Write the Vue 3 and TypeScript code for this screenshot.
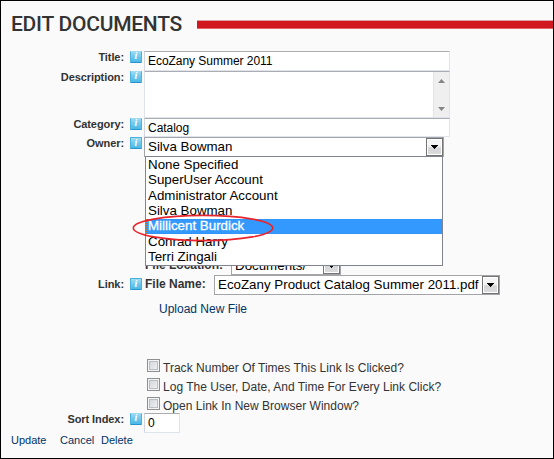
<script setup lang="ts">
import { ref } from 'vue'

const title = ref('EcoZany Summer 2011')
const category = ref('Catalog')
const sortIndex = ref('0')
const owner = 'Silva Bowman'
const highlighted = 'Millicent Burdick'
const owners: string[] = [
  'None Specified',
  'SuperUser Account',
  'Administrator Account',
  'Silva Bowman',
  'Millicent Burdick',
  'Conrad Harry',
  'Terri Zingali',
]
const trackingOptions: string[] = [
  'Track Number Of Times This Link Is Clicked?',
  'Log The User, Date, And Time For Every Link Click?',
  'Open Link In New Browser Window?',
]
</script>

<template>
  <main class="page">
    <header class="heading">
      <h1>EDIT DOCUMENTS</h1>
      <div class="rule"></div>
    </header>

    <section class="form">
      <div class="row title-row">
        <label>Title:</label>
        <span class="info clipped"><i>i</i></span>
        <input v-model="title" class="text-field" type="text" />
      </div>

      <div class="row description-row">
        <label>Description:</label>
        <span class="info clipped"><i>i</i></span>
        <div class="text-area">
          <div class="scrollbar">
            <svg width="7" height="4" viewBox="0 0 7 4"><path d="M0 4 3.5 0 7 4Z" fill="#858585" /></svg>
            <svg width="7" height="4" viewBox="0 0 7 4"><path d="M0 0H7L3.5 4Z" fill="#858585" /></svg>
          </div>
        </div>
      </div>

      <div class="row category-row">
        <label>Category:</label>
        <span class="info clipped"><i>i</i></span>
        <input v-model="category" class="text-field" type="text" />
      </div>

      <div class="row owner-row">
        <label>Owner:</label>
        <span class="info"><i>i</i></span>
        <div class="select owner-select">
          <span>{{ owner }}</span>
          <b class="arrow"><svg width="7" height="4" viewBox="0 0 7 4"><path d="M0 0H7V1H6V2H5V3H4V4H3V3H2V2H1V1H0Z" /></svg></b>
          <ul class="menu">
            <li v-for="name in owners" :key="name" :class="{ active: name === highlighted }">{{ name }}</li>
          </ul>
          <svg class="marker" width="144" height="30" viewBox="0 0 144 30">
            <ellipse cx="72" cy="15" rx="69.7" ry="12.6" fill="none" stroke="#e8242c" stroke-width="1.6" />
          </svg>
        </div>
      </div>

      <div class="row location-row">
        <span class="inner-label">File Location:</span>
        <div class="select location-select">
          <span>Documents/</span>
          <b class="arrow"><svg width="7" height="4" viewBox="0 0 7 4"><path d="M0 0H7V1H6V2H5V3H4V4H3V3H2V2H1V1H0Z" /></svg></b>
        </div>
      </div>

      <div class="row link-row">
        <label>Link:</label>
        <span class="info"><i>i</i></span>
        <span class="inner-label">File Name:</span>
        <div class="select file-select">
          <span>EcoZany Product Catalog Summer 2011.pdf</span>
          <b class="arrow"><svg width="7" height="4" viewBox="0 0 7 4"><path d="M0 0H7V1H6V2H5V3H4V4H3V3H2V2H1V1H0Z" /></svg></b>
        </div>
      </div>

      <a class="upload">Upload New File</a>

      <div class="checks">
        <div v-for="option in trackingOptions" :key="option" class="check">
          <span class="box"></span>
          <span>{{ option }}</span>
        </div>
      </div>

      <div class="row sort-row">
        <label>Sort Index:</label>
        <span class="info clipped"><i>i</i></span>
        <input v-model="sortIndex" class="text-field small" type="text" />
      </div>
    </section>

    <footer class="actions">
      <a class="update">Update</a>
      <a class="cancel">Cancel</a>
      <a>Delete</a>
    </footer>
  </main>
</template>

<style>
body {
  overflow: hidden;
}
</style>

<style scoped>
.page {
  box-sizing: border-box;
  width: 554px;
  height: 459px;
  border: 1px solid #000;
  background: #fafafa;
  font-family: 'Liberation Sans', Arial, sans-serif;
  color: #333;
  overflow: hidden;
}
.heading {
  display: flex;
  height: 50px;
}
h1 {
  margin: 9px 0 0 10px;
  width: 186px;
  font: 500 21px/28px Roboto, sans-serif;
  letter-spacing: -0.25px;
  white-space: nowrap;
  color: #333;
}
.rule {
  box-sizing: border-box;
  flex: 1;
  height: 9px;
  margin-top: 19px;
  background: #d0181e;
  border: solid #e0666b;
  border-width: 1px 0;
  border-top-color: #e0a0a3;
}
.row {
  display: flex;
  align-items: flex-start;
}
label {
  flex: none;
  width: 123px;
  margin-right: 6px;
  font-size: 11px;
  font-weight: bold;
  letter-spacing: -0.08px;
  line-height: 13px;
  text-align: right;
}
.info {
  flex: none;
  box-sizing: border-box;
  width: 12px;
  height: 12px;
  margin-right: 2px;
  border: 1px solid #4db1dc;
  border-bottom-color: #2b94cb;
  border-radius: 1px;
  background: linear-gradient(#a3dcf1, #74caec 45%, #4bb8e6);
  color: #fff;
  font: italic bold 10px/10px 'Liberation Serif', serif;
  text-align: center;
}
.info i {
  display: block;
}
.clipped {
  border-top: 0;
}
.text-field {
  box-sizing: border-box;
  width: 306px;
  height: 20px;
  padding: 0 3px;
  border: 1px solid #dfe3ec;
  border-top-color: #abadb3;
  border-left-color: #d2d6e0;
  background: #fff;
  font: 12px 'Liberation Sans', sans-serif;
  letter-spacing: -0.04px;
  color: #000;
  outline: none;
}
.title-row {
  height: 20px;
}
.description-row {
  height: 47px;
}
.text-area {
  box-sizing: border-box;
  display: flex;
  justify-content: flex-end;
  width: 306px;
  height: 47px;
  border: 1px solid #dfe3ec;
  border-top-color: #abadb3;
  background: #fff;
}
.scrollbar {
  box-sizing: border-box;
  display: flex;
  flex-direction: column;
  align-items: center;
  justify-content: space-between;
  width: 16px;
  padding: 7px 0 6px;
  background: #efefef;
  border-left: 1px solid #e4e4e4;
}
.category-row {
  height: 19px;
}
.category-row .text-field {
  height: 19px;
}
.owner-row {
  height: 119px;
}
.select {
  position: relative;
  box-sizing: border-box;
  display: flex;
  justify-content: space-between;
  height: 20px;
  padding-left: 3px;
  border: 1px solid #a3a5aa;
  background: #fff;
  font-size: 13.333px;
  line-height: 18px;
  color: #000;
  white-space: nowrap;
}
.arrow {
  box-sizing: border-box;
  display: flex;
  align-items: center;
  justify-content: center;
  width: 17px;
  height: 18px;
  border: 1px solid #747474;
  box-shadow: inset 0 0 0 1px #fff;
  background: linear-gradient(#f4f4f4 45%, #d6d6d8 55%, #dcdcde);
}
.owner-select {
  width: 300px;
}
.menu {
  position: absolute;
  top: 18px;
  left: 0;
  z-index: 2;
  box-sizing: border-box;
  width: 298px;
  height: 110px;
  margin: 0;
  padding: 0;
  border: 1px solid #7f8490;
  background: #fff;
  list-style: none;
}
.menu li {
  box-sizing: border-box;
  height: 15.4px;
  padding-left: 2px;
  line-height: 16px;
}
.menu .active {
  background: #3399ff;
  color: #fff;
  -webkit-text-stroke: 0.3px #fff;
  line-height: 14px;
  outline: 1px dotted #c96d1c;
  outline-offset: -1px;
}
.marker {
  position: absolute;
  top: 75px;
  left: -14px;
  z-index: 3;
}
.inner-label {
  width: 70px;
  font-size: 12px;
  font-weight: bold;
  line-height: 18px;
}
.location-row {
  height: 19px;
  padding-left: 144px;
}
.location-row .inner-label {
  width: 86px;
}
.location-select {
  width: 110px;
  height: 19px;
}
.location-select span {
  line-height: 18px;
}
.location-select .arrow {
  height: 17px;
}
.link-row label {
  margin-top: 3px;
}
.link-row .info {
  margin-top: 3px;
}
.link-row .inner-label {
  box-sizing: border-box;
  padding-left: 1px;
}
.file-select {
  width: 286px;
}
.upload {
  display: block;
  height: 55px;
  padding: 6px 0 0 158px;
  font-size: 12px;
  line-height: 16px;
  color: #003366;
}
.checks {
  height: 54px;
  padding: 3px 0 0 146px;
}
.check {
  display: flex;
  height: 19px;
  gap: 3px;
  font-size: 12px;
  letter-spacing: 0.02px;
  line-height: 18px;
  white-space: nowrap;
}
.box {
  box-sizing: border-box;
  width: 13px;
  height: 13px;
  border: 1px solid #8e8f8f;
  box-shadow: inset 0 0 0 1px #f4f4f4, inset 0 0 0 2px #b9bdc4;
  background: linear-gradient(135deg, #cdd1d8, #f5f5f5);
}
.small {
  width: 36px;
}
.actions {
  display: flex;
  padding: 1px 0 0 10px;
  font-size: 11px;
  line-height: 13px;
  color: #003366;
}
.update {
  width: 49px;
}
.cancel {
  width: 41px;
}
</style>
